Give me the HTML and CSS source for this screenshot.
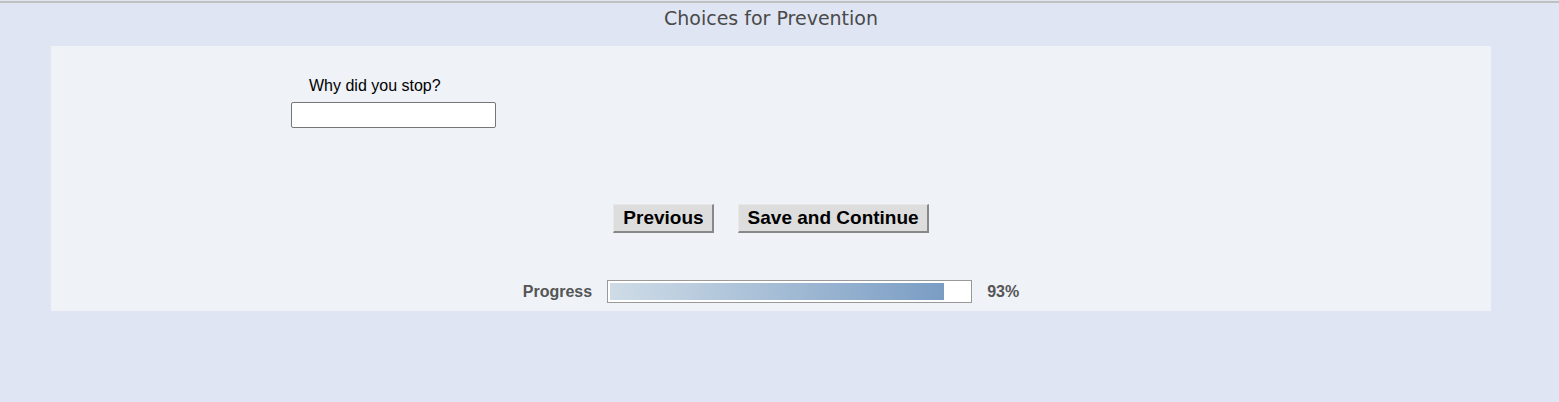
FILE: index.html
```html
<!DOCTYPE html>
<html lang="en">
<head>
    <meta charset="UTF-8">
    <title>Choices for Prevention</title>
    <link rel="stylesheet" href="styles.css">
</head>
<body>
    <div class="page">
        <h1 class="title">Choices for Prevention</h1>
        <div class="panel">
            <div class="question">
                <label for="reason">Why did you stop?</label>
                <input type="text" id="reason">
            </div>

            <div class="buttons">
                <button class="nav-button">Previous</button>
                <button class="nav-button">Save and Continue</button>
            </div>

            <div class="progress">
                <span class="progress-label">Progress</span>
                <div class="progress-bar">
                    <div class="progress-fill" style="width: 93%"></div>
                </div>
                <span class="progress-value">93%</span>
            </div>
        </div>
    </div>
</body>
</html>
```

FILE: styles.css
```css
html {
    background: #dfe5f3;
}
body {
    margin: 0;
    padding-top: 1px;
    font-family: "Liberation Sans", Arial, sans-serif;
    background: #dfe5f3;
    height: 401px;
}
.page {
    border-top: 2px solid #c0c0c0;
    padding: 0 68px 0 51px;
}
.title {
    margin: 0;
    height: 43px;
    text-align: center;
    font-family: "DejaVu Sans", Verdana, sans-serif;
    font-weight: normal;
    font-size: 19px;
    line-height: 30px;
    color: #4a4a4a;
}
.panel {
    background: #eff2f7;
    height: 265px;
}
.question {
    padding: 31px 0 0 240px;
}
.question label {
    display: block;
    padding-left: 18px;
    font-size: 16px;
    line-height: 18px;
    color: #000;
    height: 25px;
}
.question input {
    display: block;
    box-sizing: border-box;
    width: 205px;
    height: 26px;
    margin: 0;
    border: 1px solid #767676;
    border-radius: 2px;
    background: #fff;
}
.buttons {
    display: flex;
    justify-content: center;
    gap: 24px;
    margin-top: 76px;
}
.nav-button {
    box-sizing: border-box;
    height: 29px;
    padding: 0 8px 0 9px;
    font-family: "Liberation Sans", Arial, sans-serif;
    font-size: 19px;
    font-weight: bold;
    color: #000;
    background: #dddddd;
    border: 1px solid;
    border-color: #e8e8e8 #888 #888 #e8e8e8;
    border-width: 1px 2px 2px 1px;
}
.progress {
    display: flex;
    justify-content: center;
    align-items: center;
    margin-top: 47px;
    font-size: 16px;
    font-weight: bold;
    color: #555;
}
.progress-label {
    margin-right: 15px;
}
.progress-bar {
    box-sizing: border-box;
    width: 365px;
    height: 23px;
    border: 1px solid #999;
    background: #fff;
    padding: 2px;
}
.progress-fill {
    height: 100%;
    background: linear-gradient(to right, #cfdce7, #7a9dc4);
}
.progress-value {
    margin-left: 15px;
}
```
